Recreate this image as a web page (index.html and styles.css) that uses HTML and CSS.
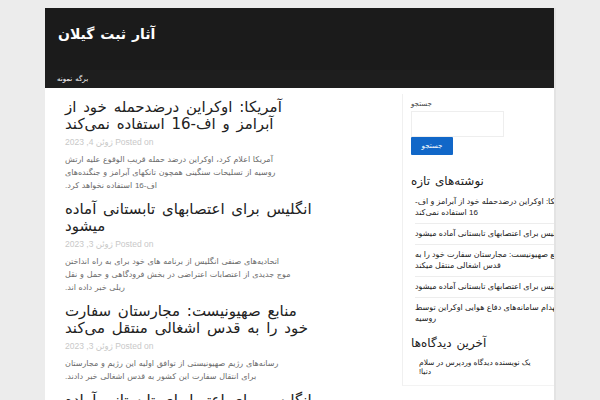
FILE: index.html
```html
<!DOCTYPE html>
<html lang="fa">
<head>
<meta charset="utf-8">
<title>آثار ثبت گیلان</title>
<link rel="stylesheet" href="styles.css">
</head>
<body>
<div class="page">
  <header class="header">
    <div class="site-title">آثار ثبت گیلان</div>
    <nav class="nav"><span>برگه نمونه</span></nav>
  </header>
  <div class="content">
    <main class="main">
      <article class="post">
        <h2 class="post-title">آمریکا: اوکراین درضدحمله خود از<br>آبرامز و اف-16 استفاده نمی‌کند</h2>
        <div class="meta">Posted on ژوئن 4, 2023</div>
        <p class="excerpt">آمریکا اعلام کرد، اوکراین درضد حمله قریب الوقوع علیه ارتش<br>روسیه از تسلیحات سنگینی همچون تانکهای آبرامز و جنگنده‌های<br>اف-16 استفاده نخواهد کرد.</p>
      </article>
      <article class="post">
        <h2 class="post-title">انگلیس برای اعتصابهای تابستانی آماده<br>میشود</h2>
        <div class="meta">Posted on ژوئن 3, 2023</div>
        <p class="excerpt">اتحادیه‌های صنفی انگلیس از برنامه های خود برای به راه انداختن<br>موج جدیدی از اعتصابات اعتراضی در بخش فرودگاهی و حمل و نقل<br>ریلی خبر داده اند.</p>
      </article>
      <article class="post">
        <h2 class="post-title">منابع صهیونیست: مجارستان سفارت<br>خود را به قدس اشغالی منتقل می‌کند</h2>
        <div class="meta">Posted on ژوئن 3, 2023</div>
        <p class="excerpt">رسانه‌های رژیم صهیونیستی از توافق اولیه این رژیم و مجارستان<br>برای انتقال سفارت این کشور به قدس اشغالی خبر دادند.</p>
      </article>
      <article class="post">
        <h2 class="post-title">انگلیس برای اعتصابهای تابستانی آماده<br>میشود</h2>
      </article>
    </main>
    <aside class="sidebar">
      <div class="search">
        <label class="search-label">جستجو</label>
        <div class="search-input"></div>
        <div class="search-btn">جستجو</div>
      </div>
      <h3 class="widget-title">نوشته‌های تازه</h3>
      <ul class="recent">
        <li>آمریکا: اوکراین درضدحمله خود از آبرامز و اف-<br>16 استفاده نمی‌کند</li>
        <li>انگلیس برای اعتصابهای تابستانی آماده میشود</li>
        <li>منابع صهیونیست: مجارستان سفارت خود را به<br>قدس اشغالی منتقل میکند</li>
        <li>انگلیس برای اعتصابهای تابستانی آماده میشود</li>
        <li>انهدام سامانه‌های دفاع هوایی اوکراین توسط<br>روسیه</li>
      </ul>
      <h3 class="widget-title comments-title">آخرین دیدگاه‌ها</h3>
      <p class="comment">یک نویسنده دیدگاه وردپرس در سلام<br>دنیا!</p>
    </aside>
  </div>
</div>
</body>
</html>
```
FILE: styles.css
```css
html, body {
  margin: 0;
  padding: 0;
}
body {
  background: #ececec;
  font-family: "Liberation Sans", "DejaVu Sans", sans-serif;
  color: #222;
  padding-top: 8px;
  height: 392px;
  overflow: hidden;
}
.page {
  margin-left: 45px;
  width: 509px;
  background: #fff;
  overflow: hidden;
  height: 400px;
  box-shadow: 2px 0 0 #e3e3e3;
}
.header {
  background: #1b1b1b;
  height: 80px;
  display: flex;
  flex-direction: column;
}
.site-title {
  color: #fff;
  font-family: "DejaVu Sans", sans-serif;
  font-weight: bold;
  font-size: 14px;
  direction: rtl;
  text-align: left;
  align-self: flex-start;
  margin: 18px 0 0 13px;
  word-spacing: 1px;
}
.nav {
  margin-top: auto;
  background: #1e1e1e;
  height: 18px;
  padding-left: 12px;
  display: flex;
  align-items: center;
}
.nav span {
  color: #fff;
  font-size: 7px;
  direction: rtl;
  word-spacing: 1px;
}
.content {
  display: flex;
  align-items: flex-start;
}
.main {
  width: 260px;
  padding: 11px 0 0 20px;
}
.post {
  margin-bottom: 9px;
}
.post-title {
  margin: 0;
  font-family: "DejaVu Sans", sans-serif;
  font-weight: normal;
  font-size: 15px;
  line-height: 17px;
  direction: rtl;
  text-align: left;
  word-spacing: 2px;
  white-space: nowrap;
  color: #222;
}
.meta {
  direction: rtl;
  text-align: left;
  font-size: 8.5px;
  color: #c8c8c8;
  margin-top: 4px;
}
.excerpt {
  margin: 6px 0 0;
  direction: rtl;
  text-align: left;
  font-size: 8px;
  line-height: 13px;
  color: #6a6a6a;
  word-spacing: 0.5px;
  white-space: nowrap;
}
.sidebar {
  margin-left: auto;
  width: 152px;
  height: 292px;
  margin-top: 6px;
  border-left: 1px solid #f0f0f0;
  border-bottom: 1px solid #f3f3f3;
  box-sizing: border-box;
  padding: 6px 0 0 8px;
}
.search-label {
  display: block;
  direction: rtl;
  text-align: left;
  font-size: 7px;
  color: #444;
}
.search-input {
  width: 91px;
  height: 24px;
  border: 1px solid #eee;
  margin-top: 3px;
}
.search-btn {
  width: 42px;
  height: 18px;
  background: #1167c8;
  color: #fff;
  font-size: 7px;
  display: flex;
  align-items: center;
  justify-content: center;
  border-radius: 1px;
}
.widget-title {
  margin: 19px 0 0;
  font-family: "DejaVu Sans", sans-serif;
  font-weight: normal;
  font-size: 12px;
  direction: rtl;
  text-align: left;
  word-spacing: 1px;
  color: #222;
}
.recent {
  list-style: none;
  margin: 4px 0 0;
  padding: 0 0 0 4px;
  width: 200px;
}
.recent li {
  direction: rtl;
  text-align: left;
  font-size: 8px;
  line-height: 11px;
  padding: 4px 0 5px;
  border-bottom: 1px solid #ededed;
  white-space: nowrap;
}
.recent li:last-child {
  border-bottom: none;
}
.comments-title {
  margin-top: 7px;
}
.comment {
  margin: 8px 0 0 8px;
  direction: rtl;
  text-align: left;
  font-size: 7.5px;
  line-height: 9px;
  white-space: nowrap;
}
```
